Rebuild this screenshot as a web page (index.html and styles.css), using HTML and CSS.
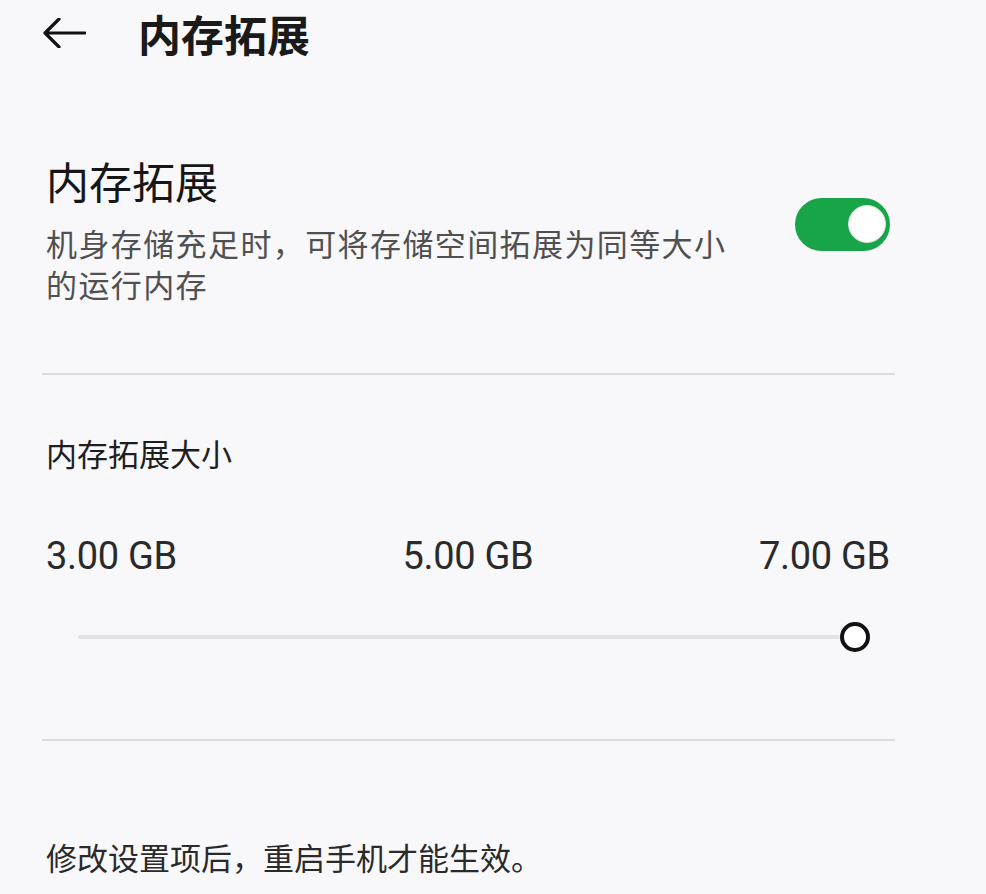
FILE: index.html
```html
<!DOCTYPE html>
<html lang="zh-CN">

<head>
    <meta charset="UTF-8">
    <meta name="viewport" content="width=device-width, initial-scale=1.0">
    <title>内存拓展</title>

    <link rel="stylesheet" href="styles.css">

</head>

<body>

    <div class="topbar">
        <svg class="back" width="44" height="30" viewBox="0 0 44 30">
            <path d="M43 15 H3 M17 1 L3 15 L17 29" fill="none" stroke="#111" stroke-width="3.2" stroke-linecap="round" stroke-linejoin="round" />
        </svg>
        <h1 class="page-title">内存拓展</h1>
    </div>

    <div class="content">

        <div class="setting-row">
            <div class="setting-text">
                <div class="setting-title">内存拓展</div>
                <div class="setting-desc">机身存储充足时，可将存储空间拓展为同等大小的运行内存</div>
            </div>
            <div class="switch on">
                <span class="knob"></span>
            </div>
        </div>

        <div class="divider"></div>

        <div class="size-label">内存拓展大小</div>

        <div class="ticks">
            <span>3.00 GB</span>
            <span>5.00 GB</span>
            <span>7.00 GB</span>
        </div>

        <div class="slider">
            <div class="track"></div>
            <div class="thumb"></div>
        </div>

        <div class="divider second"></div>

        <p class="note">修改设置项后，重启手机才能生效。</p>

    </div>

</body>

</html>
```

FILE: styles.css
```css
body {
    margin: 0;
    background: #f8f7fa;
    font-family: "Noto Sans CJK SC", "Noto Sans", sans-serif;
    color: #1a1a1a;
}

.topbar {
    height: 66px;
    display: flex;
    align-items: center;
    padding-left: 42px;
}

.back {
    display: block;
}

.page-title {
    margin: 0 0 0 52px;
    font-size: 43px;
    font-weight: 700;
    line-height: 1;
}

.content {
    padding: 0 96px 0 46px;
}

/* toggle row */
.setting-row {
    display: flex;
    align-items: center;
    margin-top: 86px;
}

.setting-text {
    flex: 1;
    padding-right: 40px;
}

.setting-title {
    font-size: 43px;
    line-height: 56px;
    color: #161616;
}

.setting-desc {
    margin-top: 14px;
    font-size: 31px;
    line-height: 41px;
    letter-spacing: 1.4px;
    color: #505050;
    max-width: 700px;
}

.switch {
    width: 95px;
    height: 53px;
    border-radius: 27px;
    background: #18a54a;
    position: relative;
    flex-shrink: 0;
    margin-top: -8px;
}

.switch .knob {
    position: absolute;
    right: 4px;
    top: 7px;
    width: 36px;
    height: 36px;
    border-radius: 50%;
    background: #fff;
    border: 1.5px solid #d7e8dc;
}

.divider {
    height: 2px;
    background: #dcdbe0;
    margin: 69px -5px 0 -4px;
}

.size-label {
    margin-top: 57px;
    font-size: 31px;
    line-height: 42px;
    color: #1e1e1e;
}

/* slider */
.ticks {
    display: flex;
    justify-content: space-between;
    margin-top: 60px;
    font-family: Roboto, "Liberation Sans", sans-serif;
    font-size: 38px;
    line-height: 44px;
    color: #2a2a2a;
    letter-spacing: -0.3px;
}

.slider {
    display: flex;
    align-items: center;
    height: 30px;
    margin: 44px 20px 0 32px;
}

.track {
    flex: 1;
    height: 4px;
    border-radius: 2px;
    background: #e2e1e6;
}

.thumb {
    width: 22px;
    height: 22px;
    border: 4px solid #111;
    border-radius: 50%;
    background: #fff;
}

.divider.second {
    margin-top: 87px;
}

.note {
    margin: 95px 0 0;
    font-size: 31px;
    line-height: 42px;
    color: #2a2a2a;
}
```
